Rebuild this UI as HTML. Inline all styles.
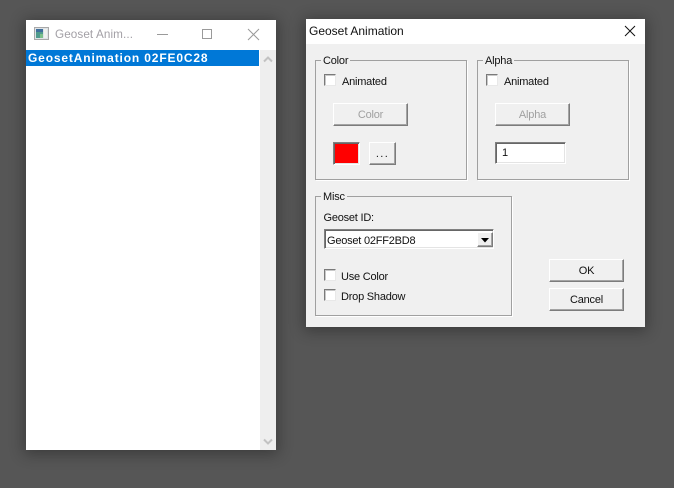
<!DOCTYPE html>
<html><head><meta charset="utf-8">
<style>
html,body{margin:0;padding:0;width:674px;height:488px;overflow:hidden;background:#565656;font-family:"Liberation Sans",sans-serif;color:#000}
.a{position:absolute;white-space:nowrap}
.t{position:absolute;white-space:nowrap;font-size:11px;line-height:14px;color:#111;letter-spacing:-.22px}
.win{position:absolute;box-shadow:0 2px 14px 2px rgba(0,0,0,.32)}
.grp{position:absolute;box-sizing:border-box;border:1px solid #a0a0a0;box-shadow:1px 1px 0 #fff}
.lbl{position:absolute;background:#f0f0f0;padding:0 2px;font-size:11px;line-height:13px;color:#111;letter-spacing:-.2px}
.cb{position:absolute;box-sizing:border-box;width:12px;height:12px;background:#fff;border:1px solid;border-color:#7a7a7a #e8e8e8 #e8e8e8 #7a7a7a;box-shadow:inset 1px 1px 0 #c8c8c8}
.btn{position:absolute;box-sizing:border-box;background:#f0f0f0;border:1px solid;border-color:#fff #7c7c7c #7c7c7c #fff;box-shadow:inset -1px -1px 0 #a4a4a4;text-align:center;font-size:11px;color:#111;letter-spacing:-.2px}
.dis{color:#a0a0a0}
.sunk{position:absolute;box-sizing:border-box;border:1px solid;border-color:#808080 #fff #fff #808080;box-shadow:inset 1px 1px 0 #666,inset -1px -1px 0 #e4e4e4}
</style></head><body>

<div class="win" style="left:26px;top:20px;width:250px;height:430px;background:#fff">
  <svg class="a" style="left:8px;top:7px" width="15" height="13" viewBox="0 0 15 13">
    <rect x=".5" y=".5" width="14" height="12" fill="#dfe3e6" stroke="#a8a8a8"/>
    <rect x="2" y="2" width="7" height="9" fill="#4f9a8c"/>
    <rect x="2" y="2" width="7" height="3" fill="#3f6f9c"/>
    <rect x="6" y="7" width="3" height="4" fill="#7cc08a"/>
    <rect x="10" y="2" width="3" height="9" fill="#eef1ee"/>
  </svg>
  <div class="a" style="left:29px;top:7px;font-size:11.7px;line-height:15px;color:#a3a0a6;letter-spacing:.1px">Geoset Anim...</div>
  <svg class="a" style="left:130px;top:8px" width="110" height="14" viewBox="0 0 110 14" fill="none" stroke="#9a9a9a">
    <path d="M1 6.5H12"/>
    <rect x="46.5" y="1.5" width="9" height="9"/>
    <path d="M92 1L103 12M103 1L92 12"/>
  </svg>
  <div class="a" style="left:0;top:30px;width:233px;height:16px;background:#0078d7"></div>
  <div class="a" style="left:2px;top:30px;font-size:12px;line-height:16px;font-weight:bold;color:#fff;letter-spacing:.85px">GeosetAnimation 02FE0C28</div>
  <div class="a" style="left:234px;top:30px;width:16px;height:400px;background:#eeeeee"></div>
  <svg class="a" style="left:237px;top:36px" width="10" height="7" viewBox="0 0 10 7" fill="none" stroke="#c2c2c2" stroke-width="2"><path d="M1 5.5L5 1.5L9 5.5"/></svg>
  <svg class="a" style="left:237px;top:418px" width="10" height="7" viewBox="0 0 10 7" fill="none" stroke="#c2c2c2" stroke-width="2"><path d="M1 1.5L5 5.5L9 1.5"/></svg>
</div>

<div class="win" style="left:306px;top:19px;width:339px;height:308px;background:#f0f0f0">
  <div class="a" style="left:0;top:0;width:339px;height:25px;background:#fff"></div>
  <div class="a" style="left:3px;top:5px;font-size:12px;line-height:15px;color:#111">Geoset Animation</div>
  <svg class="a" style="left:318px;top:6px" width="12" height="12" viewBox="0 0 12 12" fill="none" stroke="#111"><path d="M1 1L11 11M11 1L1 11"/></svg>

  <div class="grp" style="left:9px;top:41px;width:152px;height:120px"></div>
  <div class="lbl" style="left:15px;top:36px">Color</div>
  <div class="cb" style="left:18px;top:55px"></div>
  <div class="t" style="left:36px;top:56px">Animated</div>
  <div class="btn dis" style="left:27px;top:84px;width:75px;height:23px;line-height:22px">Color</div>
  <div class="sunk" style="left:27px;top:123px;width:27px;height:23px;background:#f00"></div>
  <div class="btn" style="left:63px;top:123px;width:27px;height:23px;line-height:22px;letter-spacing:1.4px">...</div>

  <div class="grp" style="left:171px;top:41px;width:152px;height:120px"></div>
  <div class="lbl" style="left:177px;top:36px">Alpha</div>
  <div class="cb" style="left:180px;top:55px"></div>
  <div class="t" style="left:198px;top:56px">Animated</div>
  <div class="btn dis" style="left:189px;top:84px;width:75px;height:23px;line-height:22px">Alpha</div>
  <div class="sunk" style="left:189px;top:123px;width:71px;height:22px;background:#fff"></div>
  <div class="t" style="left:196px;top:127px">1</div>

  <div class="grp" style="left:9px;top:177px;width:197px;height:120px"></div>
  <div class="lbl" style="left:15px;top:172px">Misc</div>
  <div class="t" style="left:17.5px;top:192px">Geoset ID:</div>
  <div class="sunk" style="left:18px;top:210px;width:170px;height:20px;background:#fff"></div>
  <div class="t" style="left:21px;top:215px">Geoset 02FF2BD8</div>
  <div class="btn" style="left:171px;top:213px;width:16px;height:15px"></div>
  <svg class="a" style="left:175px;top:219px" width="8" height="5" viewBox="0 0 8 5"><path d="M0 0H8L4 4.5Z" fill="#000"/></svg>
  <div class="cb" style="left:18px;top:250px"></div>
  <div class="t" style="left:35px;top:251px">Use Color</div>
  <div class="cb" style="left:18px;top:270px"></div>
  <div class="t" style="left:35px;top:271px">Drop Shadow</div>

  <div class="btn" style="left:243px;top:240px;width:75px;height:23px;line-height:22px">OK</div>
  <div class="btn" style="left:243px;top:269px;width:75px;height:23px;line-height:22px">Cancel</div>
</div>
</body></html>
